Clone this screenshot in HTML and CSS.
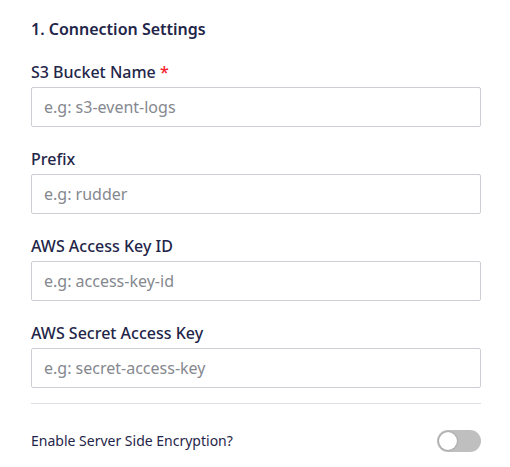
FILE: index.html
```html
<!DOCTYPE html>
<html>
<head>
<meta charset="utf-8">
<link rel="stylesheet" href="styles.css">
</head>
<body>
<div class="panel">
  <h2 class="title">1. Connection Settings</h2>
  <div class="field">
    <label class="label">S3 Bucket Name <span class="req">*</span></label>
    <input class="input" placeholder="e.g: s3-event-logs">
  </div>
  <div class="field">
    <label class="label">Prefix</label>
    <input class="input" placeholder="e.g: rudder">
  </div>
  <div class="field">
    <label class="label">AWS Access Key ID</label>
    <input class="input" placeholder="e.g: access-key-id">
  </div>
  <div class="field field-last">
    <label class="label">AWS Secret Access Key</label>
    <input class="input" placeholder="e.g: secret-access-key">
  </div>
  <div class="divider"></div>
  <div class="toggle-row">
    <span class="toggle-label">Enable Server Side Encryption?</span>
    <span class="switch"><span class="knob"></span></span>
  </div>
</div>
</body>
</html>
```

FILE: styles.css
```css
html, body {
  margin: 0;
  padding: 0;
  background: #fff;
}
body {
  font-family: "Noto Sans", "Open Sans", sans-serif;
  color: #1f2649;
}
.panel {
  width: 450px;
  padding: 18px 0 0 31px;
}
.title {
  margin: 0 0 21px;
  font-size: 16px;
  line-height: 22px;
  font-weight: 600;
}
.field {
  display: flex;
  flex-direction: column;
  margin-bottom: 21px;
}
.field-last {
  margin-bottom: 15px;
}
.label {
  font-size: 16px;
  line-height: 22px;
  font-weight: 500;
  margin-bottom: 4px;
}
.req {
  color: #f5222d;
}
.input {
  box-sizing: border-box;
  height: 40px;
  width: 450px;
  border: 1px solid #ccd0d5;
  border-radius: 2px;
  padding: 0 12px;
  font-family: inherit;
  font-size: 16px;
  color: #1f2649;
  outline: none;
}
.input::placeholder {
  color: #85888f;
}
.divider {
  height: 1px;
  background: #dcdfe3;
  margin-bottom: 26px;
}
.toggle-row {
  display: flex;
  justify-content: space-between;
  align-items: center;
  height: 22px;
}
.toggle-label {
  font-size: 14px;
  line-height: 20px;
}
.switch {
  position: relative;
  width: 44px;
  height: 22px;
  border-radius: 11px;
  background: #bfbfbf;
}
.knob {
  position: absolute;
  left: 2px;
  top: 2px;
  width: 18px;
  height: 18px;
  border-radius: 50%;
  background: #fff;
  box-shadow: 0 0 2px rgba(0,0,0,0.35);
}
```
